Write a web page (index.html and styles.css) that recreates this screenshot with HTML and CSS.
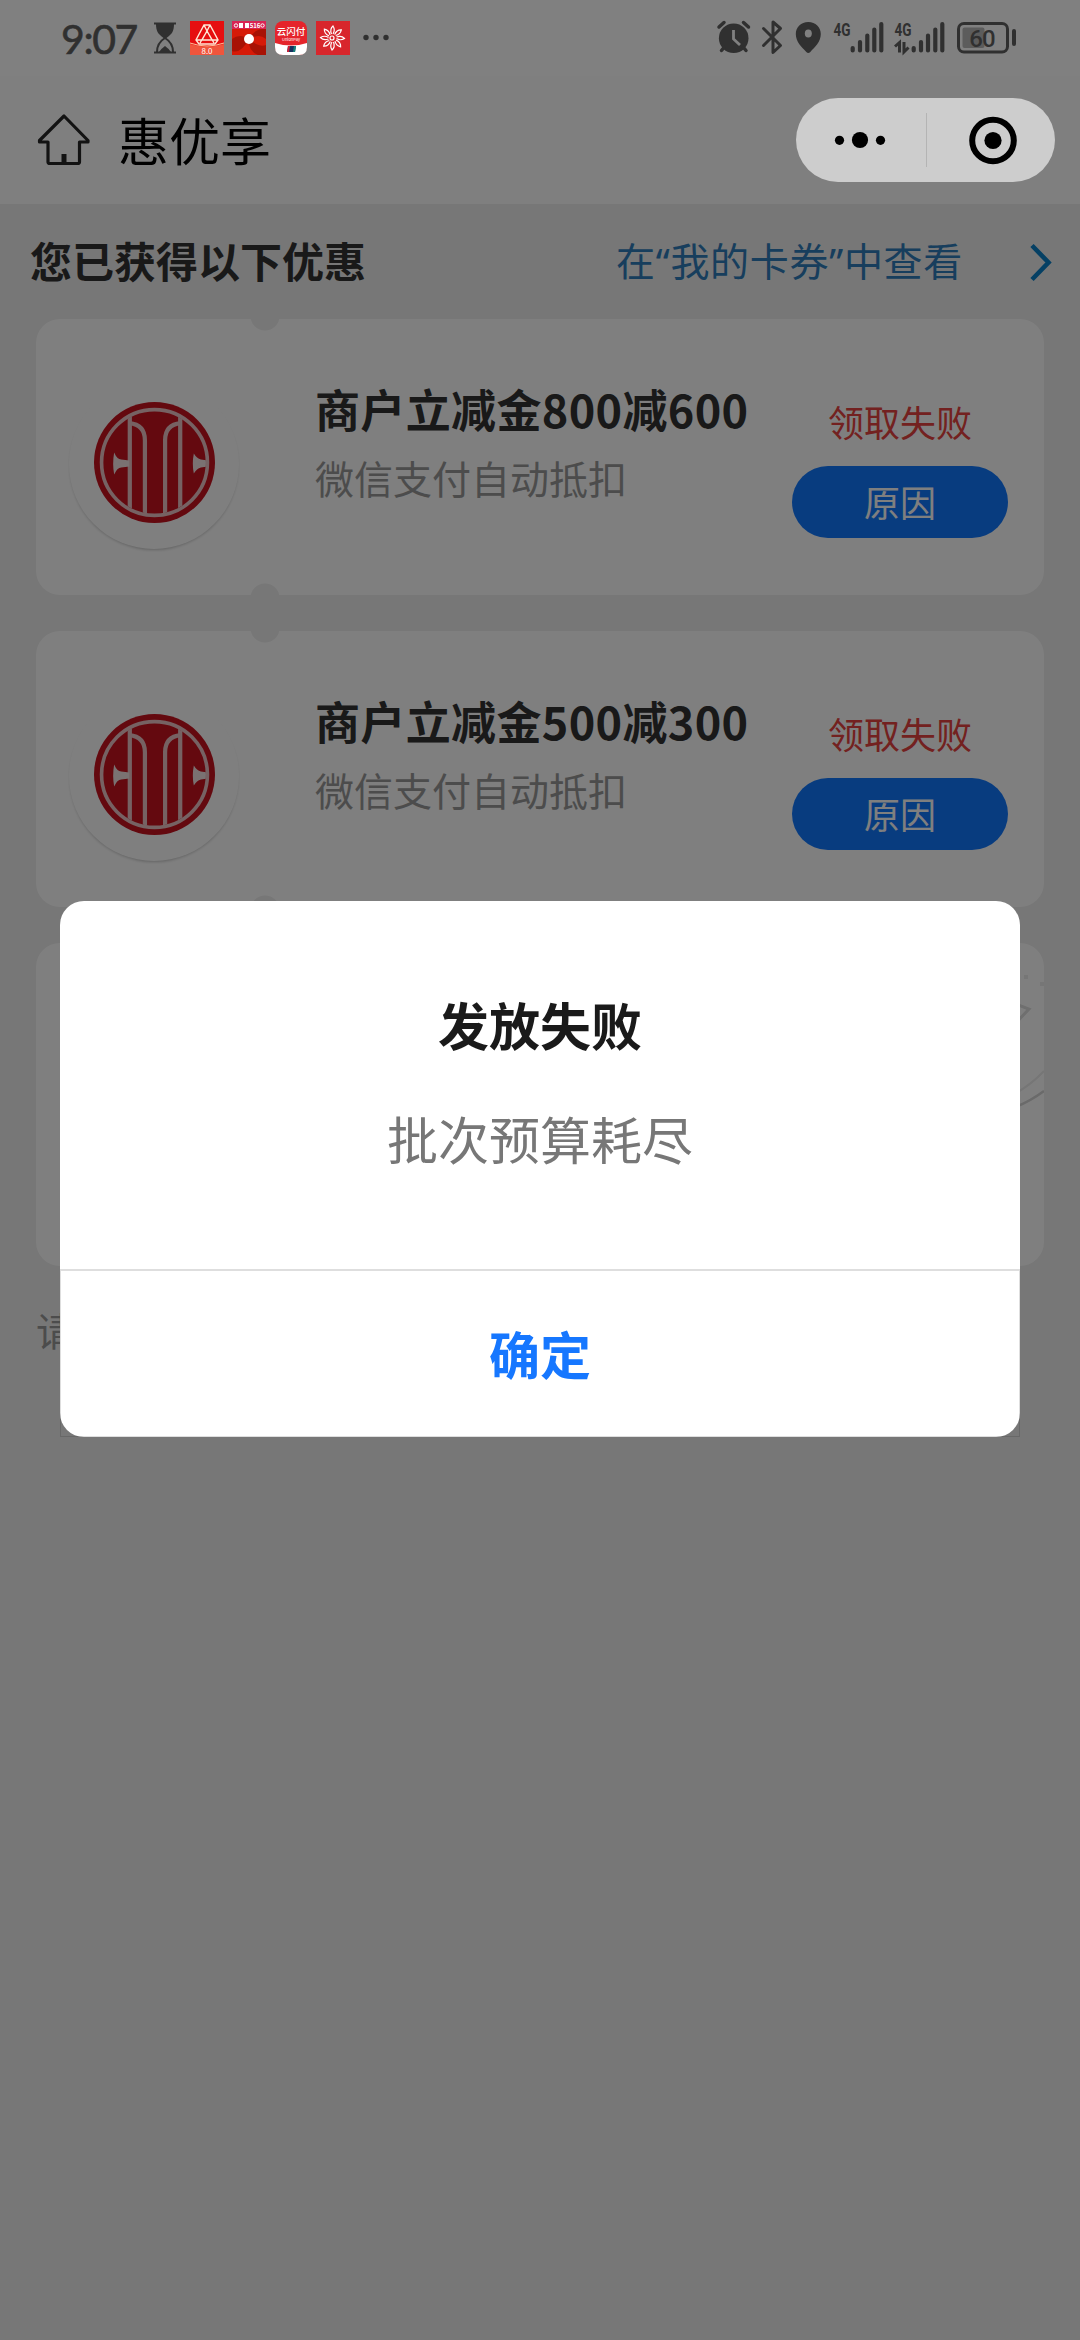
FILE: index.html
```html
<!DOCTYPE html>
<html lang="zh-CN">
  <head>
    <meta charset="UTF-8" />
    <meta name="viewport" content="width=device-width, initial-scale=1.0" />
    <title>惠优享</title>
    <link rel="stylesheet" href="styles.css">
  </head>
  <body>
    <!-- Shared logo -->
    <svg class="defs" width="0" height="0">
      <defs>
        <clipPath id="disc"><circle cx="60" cy="60" r="51" /></clipPath>
        <symbol id="bank-logo" viewBox="0 0 120 120">
          <circle cx="60" cy="60" r="60" fill="#c8121f" />
          <circle cx="60" cy="60" r="52.500" fill="none" stroke="#ecc4c6" stroke-width="3.600" />
          <g clip-path="url(#disc)" fill="none" stroke="#ecc4c6" stroke-width="4.200">
            <path d="M35.500 8v104M85.500 8v104" />
            <path d="M35 21c10 1 15.500 6 15.500 17v74M86 21c-10 1-15.500 6-15.500 17v74" />
            <path d="M20 50q3 7 7 7l8 1v6l-8 1q-4 0-7 7-2-11 0-22z" fill="#f4e4e4" stroke="none" />
            <path d="M99 51q3 5 7 6l6 1v6l-6 1q-4 1-7 6-2-10 0-20z" fill="#f4e4e4" stroke="none" />
          </g>
        </symbol>
      </defs>
    </svg>

    <div class="status-bar">
      <div class="status-left">
        <span class="time">9:07</span>
        <svg class="hourglass" width="24" height="34" viewBox="0 0 24 34">
          <path d="M1 2.500h22M1 31.500h22" stroke="#303030" stroke-width="2.200" />
          <path d="M3 3h18c0 7-2 10-7.500 14h-3C5 13 3 10 3 3z" fill="#303030" />
          <path d="M4 31c0-7 3-11 8-14 5 3 8 7 8 14" fill="none" stroke="#303030" stroke-width="2" />
          <path d="M6 31q3-4 6-6 3 2 6 6z" fill="#303030" />
        </svg>
        <div class="apps">
          <svg width="34" height="34" viewBox="0 0 34 34">
            <rect width="34" height="34" fill="#e60f10" />
            <path d="M0 23q17 5 34 0v11H0z" fill="#f0553c" />
            <path d="M0 22q17 6 34 0" fill="none" stroke="#ffc09a" />
            <path d="M14 4h6l8 15-3 4H9l-3-4zM14 4l3 6 7 12M20 4l-3 6-7 12M6 19h22M17 10l5 9H12z" fill="none" stroke="#ffe9d8" stroke-width="1.400" />
            <text x="17" y="32.500" text-anchor="middle" font-size="8" fill="#fff">8.0</text>
          </svg>
          <svg width="34" height="34" viewBox="0 0 34 34">
            <rect width="34" height="34" fill="#d61a08" />
            <path d="M17 18Q8 12 0 18v12q9 3 17-12Q16 30 26 34h8V24Q27 27 17 18q10-6 17 0V8Q24 6 17 18z" fill="#a81205" />
            <rect width="34" height="8" fill="#d92555" />
            <path d="M7 2h4v5H7zM13 2h4v5h-4z" fill="#fff" />
            <text x="23" y="7" text-anchor="middle" font-size="6" font-weight="700" fill="#fff">516</text>
            <circle cx="4" cy="4.500" r="1.700" fill="none" stroke="#fff" />
            <circle cx="30.500" cy="4.500" r="1.700" fill="none" stroke="#fff" />
            <circle cx="17" cy="18" r="5" fill="#fff" />
          </svg>
          <svg width="34" height="34" viewBox="0 0 34 34">
            <rect x="1" width="32" height="34" rx="8" fill="#e5242b" />
            <path d="M1 22q16 5 32 0v4q0 8-8 8H9q-8 0-8-8z" fill="#fff" />
            <text x="17" y="14" text-anchor="middle" font-size="9.500" font-weight="500" fill="#fff">云闪付</text>
            <text x="17" y="20" text-anchor="middle" font-size="4" fill="#fff">UnionPay</text>
            <path d="M14 25h8l-1 6h-8z" fill="#17315f" />
            <path d="M14 25h2l-1 6h-2z" fill="#d21f36" />
            <path d="M20 25h2l-1 6h-2z" fill="#12817c" />
          </svg>
          <svg width="34" height="34" viewBox="0 0 34 34">
            <rect width="34" height="34" fill="#d8262c" />
            <g fill="none" stroke="#fff" stroke-width="1.200">
              <path id="petal" d="M15.500 13q-2-5 1.500-8 2.500 4 0 8" />
              <use href="#petal" transform="rotate(45 16.500 17)" />
              <use href="#petal" transform="rotate(90 16.500 17)" />
              <use href="#petal" transform="rotate(135 16.500 17)" />
              <use href="#petal" transform="rotate(180 16.500 17)" />
              <use href="#petal" transform="rotate(225 16.500 17)" />
              <use href="#petal" transform="rotate(270 16.500 17)" />
              <use href="#petal" transform="rotate(315 16.500 17)" />
              <circle cx="16" cy="17" r="2" />
            </g>
          </svg>
        </div>
        <svg width="26" height="34" viewBox="0 0 26 34" fill="#303030">
          <circle cx="3" cy="16.500" r="2.700" />
          <circle cx="13" cy="16.500" r="2.700" />
          <circle cx="23" cy="16.500" r="2.700" />
        </svg>
      </div>

      <div class="status-right">
        <!-- Alarm -->
        <svg width="36" height="40" viewBox="0 0 36 40">
          <circle cx="17.700" cy="20.300" r="14.800" fill="#303030" />
          <path d="M3 9l5-4.500M32.500 9l-5-4.500M8 29.500l-2.500 3M27.500 29.500l2.500 3" stroke="#303030" stroke-width="3.500" stroke-linecap="round" />
          <path d="M17.500 12v9l6.500 6" fill="none" stroke="#808080" stroke-width="2.800" />
        </svg>
        <!-- Bluetooth -->
        <svg width="24" height="40" viewBox="0 0 24 40">
          <path d="M2.500 10.500l17 17-7.500 7V4l7.500 6.500-17 17" fill="none" stroke="#303030" stroke-width="3" stroke-linejoin="round" stroke-linecap="round" />
        </svg>
        <!-- Location -->
        <svg width="28" height="40" viewBox="0 0 28 40">
          <path d="M14.300 4C7 4 1.800 9 1.800 16c0 8 6 13 10.500 18q2 2 4 0c4.500-5 10.500-10 10.500-18 0-7-5.200-12-12.500-12z" fill="#303030" />
          <ellipse cx="14.300" cy="15.500" rx="3.500" ry="4" fill="#808080" />
        </svg>
        <!-- Signal -->
        <svg class="signal" width="54" height="40" viewBox="0 0 54 40">
          <text x="2.500" y="18" textLength="17" lengthAdjust="spacingAndGlyphs">4G</text>
          <path d="M21.700 30v2.500M29 24v8.500M36.300 17.500v15M43.300 11.500v21M50.300 6v26.500" />
        </svg>
        <svg class="signal" width="54" height="40" viewBox="0 0 54 40">
          <text x=".5" y="18" textLength="17" lengthAdjust="spacingAndGlyphs">4G</text>
          <path d="M19.700 30v2.500M27 24v8.500M34 17.500v15M41.300 11.500v21M48.300 6v26.500" />
          <path class="arrows" d="M1 28.500l4.500-4v10M10 24v10l4.500-4.500" />
        </svg>
        <!-- Battery -->
        <svg class="battery" width="60" height="40" viewBox="0 0 60 40">
          <rect x="1.500" y="5.500" width="49" height="28.500" rx="5.500" fill="none" stroke="#303030" stroke-width="3" />
          <rect x="5.500" y="9.500" width="22" height="20.500" rx="2" fill="#5c5c5c" />
          <text x="25" y="28.500" text-anchor="middle">60</text>
          <path d="M57 13v13" stroke="#303030" stroke-width="4" stroke-linecap="round" />
        </svg>
      </div>
    </div>

    <header class="nav">
      <svg class="home" width="54" height="54" viewBox="0 0 54 54">
        <path d="M27 3L2.500 27.500v1.500H11v20q0 1.500 2 1.500h27.500q2 0 2-1.500V29h8.500v-1.500z" fill="none" stroke="#262626" stroke-width="3.200" stroke-linejoin="round" />
        <path d="M24.500 41h5v9h-5z" fill="#262626" />
      </svg>
      <h1>惠优享</h1>
      <div class="capsule">
        <svg class="more" width="130" height="84" viewBox="0 0 130 84">
          <circle cx="43.500" cy="42.300" r="4.600" />
          <circle cx="64" cy="42" r="8.100" />
          <circle cx="84.500" cy="42.300" r="4.600" />
        </svg>
        <svg class="close" width="129" height="84" viewBox="0 0 129 84">
          <circle cx="67" cy="42.500" r="20.800" fill="none" stroke="#000" stroke-width="6" />
          <circle cx="67" cy="42.500" r="8.600" />
        </svg>
      </div>
    </header>

    <main>
      <div class="section-head">
        <h2>您已获得以下优惠</h2>
        <a class="cards-link">
          <span>在“我的卡券”中查看</span>
          <svg width="24" height="40" viewBox="0 0 24 40">
            <path d="M4 3.500L20.500 20.500 4 37.500" fill="none" stroke="#0a80c8" stroke-width="4.600" />
          </svg>
        </a>
      </div>

      <div class="coupon">
        <div class="logo"><svg width="121" height="121"><use href="#bank-logo" /></svg></div>
        <div class="info">
          <h3>商户立减金800减600</h3>
          <p>微信支付自动抵扣</p>
        </div>
        <div class="result">
          <span>领取失败</span>
          <button>原因</button>
        </div>
      </div>

      <div class="coupon">
        <div class="logo"><svg width="121" height="121"><use href="#bank-logo" /></svg></div>
        <div class="info">
          <h3>商户立减金500减300</h3>
          <p>微信支付自动抵扣</p>
        </div>
        <div class="result">
          <span>领取失败</span>
          <button>原因</button>
        </div>
      </div>

      <div class="panel">
        <!-- Stamp -->
        <svg width="60" height="180" viewBox="0 0 60 180" fill="none" stroke="#ececec" stroke-width="2">
          <path d="M24 154q20-9 36-26" />
          <path d="M24 58l21 8-16 17" stroke="#dedede" stroke-width="3" />
          <path d="M24 167q20-7 36-19" stroke="#d4d4d4" stroke-width="2.500" />
          <path d="M40 34h4M56 41h4" stroke-width="4" />
        </svg>
      </div>
      <p class="tip">请</p>
    </main>

    <div class="mask"></div>
    <div class="dialog">
      <div class="dialog-body">
        <h2>发放失败</h2>
        <p>批次预算耗尽</p>
      </div>
      <button class="confirm">确定</button>
    </div>
  </body>
</html>
```
FILE: styles.css
```css
* {
  box-sizing: border-box;
}

body {
  margin: 0;
  min-height: 2340px;
  background: #eee;
  color: #333;
  font-family: "Noto Sans CJK SC", sans-serif;
}

h1,
h2,
h3,
p {
  margin: 0;
}

svg {
  display: block;
  flex: none;
}

button {
  border: none;
  padding: 0;
  font-family: inherit;
}

.defs {
  position: absolute;
}

/* Status bar */
.status-bar {
  position: relative;
  z-index: 20;
  display: flex;
  justify-content: space-between;
  align-items: center;
  height: 76px;
  padding: 0 63px 0 61px;
  background: #808080;
}

.status-left,
.status-right,
.apps {
  display: flex;
  align-items: center;
}

.time {
  width: 92px;
  padding-top: 2px;
  color: #303030;
  font-family: Lato, sans-serif;
  font-size: 41px;
  line-height: 44px;
  letter-spacing: -1.4px;
  -webkit-text-stroke: 0.6px #303030;
}

.hourglass {
  margin-right: 13px;
}

.apps {
  gap: 8px;
  margin-right: 13px;
}

.status-right {
  gap: 9px;
}

.signal {
  fill: #303030;
  font: bold 19px Roboto, sans-serif;
}

.signal path {
  fill: none;
  stroke: #303030;
  stroke-width: 4.2;
  stroke-linecap: round;
}

.signal .arrows {
  stroke-width: 3;
  stroke-linecap: butt;
}

.battery {
  fill: #303030;
  font: 500 24px Roboto, sans-serif;
  letter-spacing: -1px;
}

/* Navigation */
.nav {
  display: flex;
  align-items: center;
  height: 128px;
  padding: 0 25px 0 37px;
  background: #fff;
}

.nav h1 {
  margin-left: 27px;
  padding-bottom: 3px;
  color: #000;
  font-size: 51px;
  font-weight: 400;
  line-height: 70px;
}

.capsule {
  position: relative;
  z-index: 20;
  display: flex;
  margin-left: auto;
  width: 259px;
  height: 84px;
  border-radius: 42px;
  background: #cdcdcd;
}

.close {
  background: linear-gradient(#b4b4b4, #b4b4b4) 0 15px / 1px 54px no-repeat;
}

/* Coupons */
main {
  padding: 0 36px;
}

.section-head {
  display: flex;
  justify-content: space-between;
  align-items: center;
  height: 115px;
  margin: 0 -8px 0 -6px;
}

.section-head h2 {
  padding-bottom: 3px;
  font-size: 42px;
  line-height: 60px;
}

.cards-link {
  display: flex;
  align-items: center;
  gap: 65px;
  color: #2f7cba;
  font-family: "Noto Sans", "Noto Sans CJK SC", sans-serif;
  font-size: 39px;
  line-height: 60px;
}

.cards-link span {
  padding-bottom: 2px;
  letter-spacing: 0.7px;
}

.coupon {
  display: flex;
  align-items: flex-start;
  height: 276px;
  margin-bottom: 36px;
  padding: 60px 36px 0 33px;
  border-radius: 24px;
  background:
    radial-gradient(circle at 229px -3px, #eee 14px, transparent 15px),
    radial-gradient(circle at 229px 279px, #eee 14px, transparent 15px),
    #fff;
}

.logo {
  display: flex;
  justify-content: center;
  width: 170px;
  height: 170px;
  padding-top: 23px;
  border-radius: 50%;
  box-shadow: 0 2px 3px -1px rgba(0, 0, 0, 0.22);
}

.info {
  margin-left: 76px;
}

.info h3 {
  font-size: 45px;
  line-height: 60px;
  letter-spacing: 0.35px;
}

.info p {
  margin-top: 8px;
  color: #999;
  font-size: 39px;
  line-height: 60px;
}

.result {
  display: flex;
  flex-direction: column;
  align-items: center;
  margin-left: auto;
  padding-top: 18px;
  color: #e64340;
  font-size: 36px;
  line-height: 48px;
}

.result button {
  width: 216px;
  height: 72px;
  margin-top: 21px;
  padding-bottom: 2px;
  border-radius: 36px;
  background: #1078ff;
  color: #fff;
  font-size: 36px;
}

.panel {
  display: flex;
  justify-content: flex-end;
  height: 323px;
  border-radius: 24px;
  background: #fff;
  overflow: hidden;
}

.tip {
  margin-top: 33px;
  color: #999;
  font-size: 39px;
  line-height: 60px;
}

/* Dialog */
.mask {
  position: fixed;
  inset: 0;
  z-index: 10;
  background: rgba(0, 0, 0, 0.5);
}

.dialog {
  position: fixed;
  top: 901px;
  left: 60px;
  z-index: 30;
  display: flex;
  flex-direction: column;
  width: 960px;
  height: 536px;
  border-radius: 24px;
  background: #fff;
  text-align: center;
}

.dialog-body {
  flex: 1;
  padding-top: 88px;
}

.dialog-body h2 {
  color: #1a1a1a;
  font-size: 51px;
  line-height: 70px;
}

.dialog-body p {
  margin-top: 44px;
  color: #777;
  font-size: 51px;
  line-height: 70px;
}

.confirm {
  height: 168px;
  padding-bottom: 2px;
  border: 1px solid rgba(0, 0, 0, 0.13);
  border-top-width: 2px;
  background: transparent;
  color: #1677ff;
  font-size: 51px;
  font-weight: 700;
}
```
